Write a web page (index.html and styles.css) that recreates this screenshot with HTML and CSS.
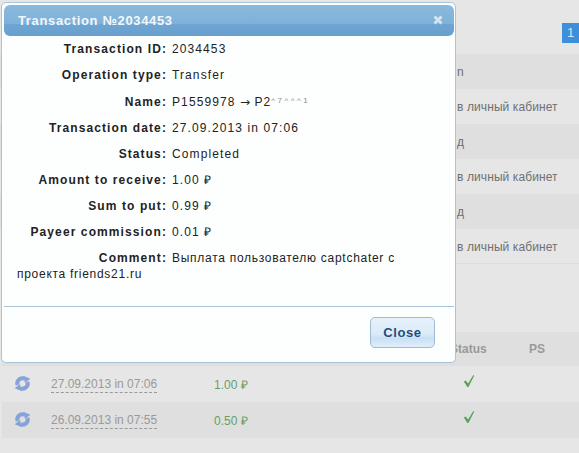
FILE: index.html
```html
<!DOCTYPE html>
<html lang="en">
  <head>
    <meta charset="UTF-8" />
    <meta name="viewport" content="width=device-width, initial-scale=1.0" />
    <title>Transaction</title>
    <link rel="stylesheet" href="styles.css">
  </head>
  <body>
    <div class="page">
      <div class="pager"><span class="page-num">1</span></div>

      <div class="history">
        <div class="history-row">n</div>
        <div class="history-row">в личный кабинет</div>
        <div class="history-row">д</div>
        <div class="history-row">в личный кабинет</div>
        <div class="history-row">д</div>
        <div class="history-row last">в личный кабинет</div>
      </div>

      <div class="payments">
        <div class="pay-row pay-head">
          <span></span><span></span><span></span>
          <span>Status</span>
          <span>PS</span>
        </div>
        <div class="pay-row">
          <svg class="swap-icon" viewBox="0 0 16 16"><use href="#swap"></use></svg>
          <span><a class="pay-date">27.09.2013 in 07:06</a></span>
          <span class="pay-sum">1.00 ₽</span>
          <svg class="tick-icon" viewBox="0 0 14 16"><use href="#tick"></use></svg>
          <span></span>
        </div>
        <div class="pay-row">
          <svg class="swap-icon" viewBox="0 0 16 16"><use href="#swap"></use></svg>
          <span><a class="pay-date">26.09.2013 in 07:55</a></span>
          <span class="pay-sum">0.50 ₽</span>
          <svg class="tick-icon" viewBox="0 0 14 16"><use href="#tick"></use></svg>
          <span></span>
        </div>
      </div>

      <div class="modal">
        <div class="modal-title">
          <span>Transaction №2034453</span>
          <svg class="close-x" viewBox="0 0 10 10"><path d="M1.5 1.5l7 7M8.5 1.5l-7 7" /></svg>
        </div>
        <div class="modal-body">
          <p class="field"><b>Transaction ID:</b>2034453</p>
          <p class="field"><b>Operation type:</b>Transfer</p>
          <p class="field"><b>Name:</b>P1559978 <span class="arrow">→</span> P2<span class="smudged">^7^^^1</span></p>
          <p class="field"><b>Transaction date:</b>27.09.2013 in 07:06</p>
          <p class="field"><b>Status:</b>Completed</p>
          <p class="field"><b>Amount to receive:</b>1.00 ₽</p>
          <p class="field"><b>Sum to put:</b>0.99 ₽</p>
          <p class="field"><b>Payeer commission:</b>0.01 ₽</p>
          <p class="field"><b>Comment:</b><span class="comment">Выплата пользователю captchater с проекта friends21.ru</span></p>
        </div>
        <div class="modal-foot">
          <button class="close-btn">Close</button>
        </div>
      </div>
    </div>

    <svg class="defs" width="0" height="0">
      <symbol id="swap" viewBox="0 0 16 16">
        <g id="swap-half">
          <path d="M3.4 9.4A4.6 4.6 0 0 1 9.6 3.6" fill="none" stroke="#86a2d8" stroke-width="3.8" />
          <path d="M8.6 0.6L15.4 3.6 10.4 7.6Z" fill="#86a2d8" />
        </g>
        <use href="#swap-half" transform="rotate(180 8 8)" />
      </symbol>
      <symbol id="tick" viewBox="0 0 14 16">
        <path d="M1 8.5L3.2 7.4 6 11 12 1 13 1.8 6.4 15 5 15Z" fill="#5aa35a" />
      </symbol>
    </svg>
  </body>
</html>
```

FILE: styles.css
```css
html,
body {
  margin: 0;
  height: 100%;
}

body {
  font-family: "Liberation Sans", Arial, sans-serif;
  font-size: 12px;
  background-color: #e6e6e6;
  overflow: hidden;
}

.page {
  position: relative;
  height: 453px;
  overflow: hidden;
}

.defs {
  position: absolute;
}

.pager {
  display: flex;
  justify-content: flex-end;
  height: 31px;
  padding-top: 23px;
}

.page-num {
  width: 17px;
  height: 20px;
  line-height: 20px;
  text-align: center;
  color: #cfe4f7;
  font-size: 13px;
  background-color: #3d8fdb;
}

.history {
  color: #707070;
  letter-spacing: 0.1px;
}

.history-row {
  height: 35px;
  line-height: 36px;
  padding-left: 457px;
  background-color: #dfdfdf;
}

.history-row:nth-child(even) {
  background-color: #e6e6e6;
}

.history-row.last {
  border-bottom: 1px solid #dedede;
  box-sizing: border-box;
}

.payments {
  margin-top: 68px;
  margin-left: 2px;
}

.pay-row {
  display: grid;
  grid-template-columns: 49px 163px 236px 79px 1fr;
  align-items: center;
  height: 36px;
  background-color: #e6e6e6;
}

.pay-row:last-child {
  background-color: #dfdfdf;
}

.pay-head {
  height: 34px;
  background-color: #dfdfdf;
  color: #999;
  font-weight: bold;
  box-sizing: border-box;
}

.swap-icon {
  width: 17px;
  height: 17px;
  margin-left: 12px;
  margin-top: -1px;
}

.tick-icon {
  width: 12px;
  height: 14px;
  margin-left: 13px;
  margin-top: -6px;
}

.pay-date {
  color: #999;
  border-bottom: 1px dashed #999;
  padding-bottom: 1px;
}

.pay-sum {
  color: #669f66;
}

.modal {
  position: absolute;
  left: 1px;
  top: 2px;
  width: 453px;
  height: 359px;
  background-color: #fdffff;
  border: 1px solid #a9c4d6;
  border-radius: 5px;
}

.modal-title {
  display: flex;
  justify-content: space-between;
  align-items: center;
  height: 31px;
  margin: 2px 1px 0 2px;
  padding: 0 11px 0 14px;
  color: #f2f7fb;
  font-size: 13px;
  font-weight: bold;
  letter-spacing: 0.65px;
  background: linear-gradient(#8bb9dd, #7fb1d9 60%, #6ea5d2 62%, #689fcd);
  border-radius: 6px;
}

.close-x {
  width: 10px;
  height: 10px;
  margin-top: -1px;
  stroke: #d6e3ee;
  stroke-width: 3;
}

.modal-body {
  height: 265px;
  padding: 5px 18px 0 13px;
  letter-spacing: 1.1px;
  color: #222;
  border-bottom: 1px solid #a9c4d6;
  margin: 0 1px 0 2px;
}

.field {
  margin: 0 0 10px;
  line-height: 16px;
}

.field b {
  display: inline-block;
  width: 150px;
  margin-right: 5px;
  text-align: right;
}

.arrow {
  font-family: "DejaVu Sans", sans-serif;
  letter-spacing: 0;
}

.comment {
  letter-spacing: 0.72px;
}

.smudged {
  font-size: 8px;
  letter-spacing: 2.5px;
  color: #888;
  vertical-align: 3px;
}

.modal-foot {
  display: flex;
  justify-content: flex-end;
  padding: 10px 20px 0 0;
}

.close-btn {
  width: 65px;
  height: 31px;
  padding: 0;
  font-family: inherit;
  font-size: 13px;
  font-weight: bold;
  letter-spacing: 0.6px;
  color: #1f4e79;
  background: linear-gradient(#e6f1fb, #dcebf8 55%, #c9e0f4 70%, #e0eefa);
  border: 1px solid #9dbbd2;
  border-radius: 5px;
}
```
